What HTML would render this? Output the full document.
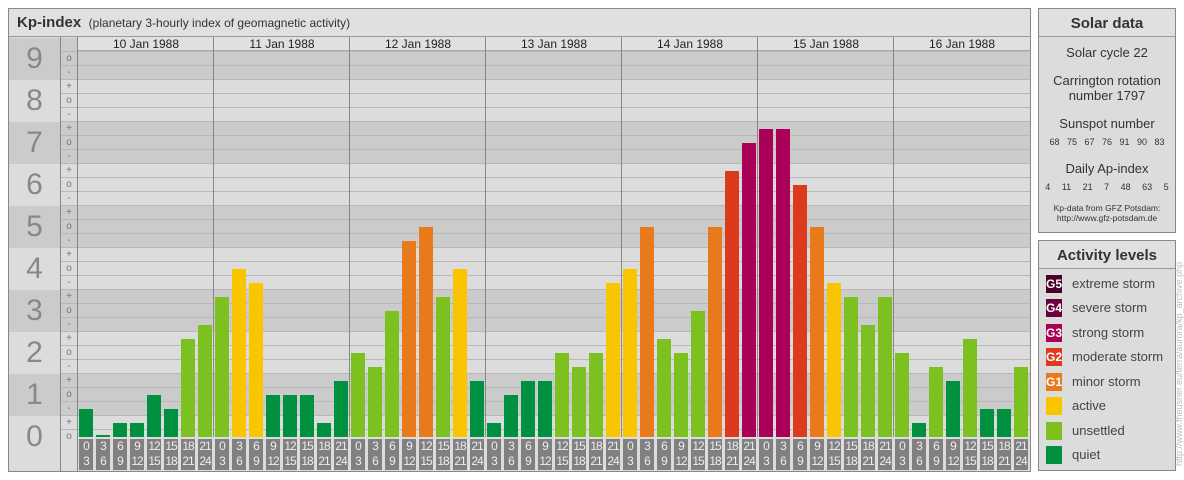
<!DOCTYPE html>
<html><head><meta charset="utf-8"><style>
*{margin:0;padding:0;box-sizing:border-box}
body{width:1184px;height:480px;background:#fff;position:relative;overflow:hidden;font-family:"Liberation Sans",sans-serif}
.a{position:absolute}
.b{position:absolute;width:14px;bottom:43px}
.q{background:#009140}.u{background:#7cc11f}.y{background:#f9c400}.o{background:#e87a1c}.r{background:#dc3a1c}.m{background:#aa0058}
.l{position:absolute;top:439px;width:14px;height:31px;background:#808080;color:#eee;font-size:12px;line-height:15px;text-align:center;letter-spacing:-1px}
.d{position:absolute;left:9px;width:51px;text-align:center;font-size:30px;color:#888;line-height:30px}
.s{position:absolute;left:61px;width:16px;text-align:center;font-size:10px;color:#777;line-height:10px}
.h{position:absolute;top:37px;width:136px;text-align:center;font-size:12px;color:#222;line-height:14px}
.g{position:absolute;left:1046px;width:16px;height:18px;color:#fff;font-size:12px;font-weight:bold;line-height:18px;text-align:center;letter-spacing:0}
.gt{position:absolute;left:1072px;font-size:13px;color:#444;line-height:18px}
.c{position:absolute;left:1039px;width:136px;text-align:center;color:#333}
</style></head><body>
<div class="a" style="left:8px;top:8px;width:1023px;height:464px;border:1px solid #888;background:#dcdcdc"></div>
<div class="a" style="left:9px;top:9px;width:1021px;height:28px;background:#e0e0e0;border-bottom:1px solid #999"></div>
<div class="a" style="left:17px;top:14px;font-size:15px;font-weight:bold;color:#333">Kp-index <span style="font-weight:normal;font-size:12px;color:#333">&nbsp;(planetary 3-hourly index of geomagnetic activity)</span></div>
<div class="a" style="left:9px;top:37px;width:1021px;height:400px;background:#dcdcdc"></div>
<div class="a" style="left:9px;top:38px;width:1021px;height:42px;background:#cbcbcb"></div>
<div class="a" style="left:9px;top:122px;width:1021px;height:42px;background:#cbcbcb"></div>
<div class="a" style="left:9px;top:206px;width:1021px;height:42px;background:#cbcbcb"></div>
<div class="a" style="left:9px;top:290px;width:1021px;height:42px;background:#cbcbcb"></div>
<div class="a" style="left:9px;top:374px;width:1021px;height:42px;background:#cbcbcb"></div>
<div class="a" style="left:78px;top:37px;width:952px;height:14px;background:#e0e0e0;border-bottom:1px solid #aaa"></div>
<div class="a" style="left:61px;top:51px;width:969px;height:380px;background:repeating-linear-gradient(to bottom,#b8b8b8 0,#b8b8b8 1px,transparent 1px,transparent 14px)"></div>
<div class="a" style="left:9px;top:437px;width:1021px;height:34px;background:#dcdcdc"></div>
<div class="a" style="left:60px;top:37px;width:1px;height:434px;background:#888"></div>
<div class="a" style="left:77px;top:37px;width:1px;height:434px;background:#888"></div>
<div class="a" style="left:213px;top:37px;width:1px;height:400px;background:#888"></div>
<div class="a" style="left:349px;top:37px;width:1px;height:400px;background:#888"></div>
<div class="a" style="left:485px;top:37px;width:1px;height:400px;background:#888"></div>
<div class="a" style="left:621px;top:37px;width:1px;height:400px;background:#888"></div>
<div class="a" style="left:757px;top:37px;width:1px;height:400px;background:#888"></div>
<div class="a" style="left:893px;top:37px;width:1px;height:400px;background:#888"></div>
<div class="h" style="left:78px">10 Jan 1988</div><div class="h" style="left:214px">11 Jan 1988</div><div class="h" style="left:350px">12 Jan 1988</div><div class="h" style="left:486px">13 Jan 1988</div><div class="h" style="left:622px">14 Jan 1988</div><div class="h" style="left:758px">15 Jan 1988</div><div class="h" style="left:894px">16 Jan 1988</div>
<div class="d" style="top:44px">9</div><div class="d" style="top:86px">8</div><div class="d" style="top:128px">7</div><div class="d" style="top:170px">6</div><div class="d" style="top:212px">5</div><div class="d" style="top:254px">4</div><div class="d" style="top:296px">3</div><div class="d" style="top:338px">2</div><div class="d" style="top:380px">1</div><div class="d" style="top:422px">0</div>
<div class="s" style="top:54px">o</div><div class="s" style="top:68px">-</div>
<div class="s" style="top:82px">+</div><div class="s" style="top:96px">o</div><div class="s" style="top:110px">-</div>
<div class="s" style="top:124px">+</div><div class="s" style="top:138px">o</div><div class="s" style="top:152px">-</div>
<div class="s" style="top:166px">+</div><div class="s" style="top:180px">o</div><div class="s" style="top:194px">-</div>
<div class="s" style="top:208px">+</div><div class="s" style="top:222px">o</div><div class="s" style="top:236px">-</div>
<div class="s" style="top:250px">+</div><div class="s" style="top:264px">o</div><div class="s" style="top:278px">-</div>
<div class="s" style="top:292px">+</div><div class="s" style="top:306px">o</div><div class="s" style="top:320px">-</div>
<div class="s" style="top:334px">+</div><div class="s" style="top:348px">o</div><div class="s" style="top:362px">-</div>
<div class="s" style="top:376px">+</div><div class="s" style="top:390px">o</div><div class="s" style="top:404px">-</div>
<div class="s" style="top:418px">+</div><div class="s" style="top:432px">o</div>
<div class="b q" style="left:79px;height:28px"></div><div class="b q" style="left:96px;height:2px"></div><div class="b q" style="left:113px;height:14px"></div><div class="b q" style="left:130px;height:14px"></div><div class="b q" style="left:147px;height:42px"></div><div class="b q" style="left:164px;height:28px"></div><div class="b u" style="left:181px;height:98px"></div><div class="b u" style="left:198px;height:112px"></div>
<div class="b u" style="left:215px;height:140px"></div><div class="b y" style="left:232px;height:168px"></div><div class="b y" style="left:249px;height:154px"></div><div class="b q" style="left:266px;height:42px"></div><div class="b q" style="left:283px;height:42px"></div><div class="b q" style="left:300px;height:42px"></div><div class="b q" style="left:317px;height:14px"></div><div class="b q" style="left:334px;height:56px"></div>
<div class="b u" style="left:351px;height:84px"></div><div class="b u" style="left:368px;height:70px"></div><div class="b u" style="left:385px;height:126px"></div><div class="b o" style="left:402px;height:196px"></div><div class="b o" style="left:419px;height:210px"></div><div class="b u" style="left:436px;height:140px"></div><div class="b y" style="left:453px;height:168px"></div><div class="b q" style="left:470px;height:56px"></div>
<div class="b q" style="left:487px;height:14px"></div><div class="b q" style="left:504px;height:42px"></div><div class="b q" style="left:521px;height:56px"></div><div class="b q" style="left:538px;height:56px"></div><div class="b u" style="left:555px;height:84px"></div><div class="b u" style="left:572px;height:70px"></div><div class="b u" style="left:589px;height:84px"></div><div class="b y" style="left:606px;height:154px"></div>
<div class="b y" style="left:623px;height:168px"></div><div class="b o" style="left:640px;height:210px"></div><div class="b u" style="left:657px;height:98px"></div><div class="b u" style="left:674px;height:84px"></div><div class="b u" style="left:691px;height:126px"></div><div class="b o" style="left:708px;height:210px"></div><div class="b r" style="left:725px;height:266px"></div><div class="b m" style="left:742px;height:294px"></div>
<div class="b m" style="left:759px;height:308px"></div><div class="b m" style="left:776px;height:308px"></div><div class="b r" style="left:793px;height:252px"></div><div class="b o" style="left:810px;height:210px"></div><div class="b y" style="left:827px;height:154px"></div><div class="b u" style="left:844px;height:140px"></div><div class="b u" style="left:861px;height:112px"></div><div class="b u" style="left:878px;height:140px"></div>
<div class="b u" style="left:895px;height:84px"></div><div class="b q" style="left:912px;height:14px"></div><div class="b u" style="left:929px;height:70px"></div><div class="b q" style="left:946px;height:56px"></div><div class="b u" style="left:963px;height:98px"></div><div class="b q" style="left:980px;height:28px"></div><div class="b q" style="left:997px;height:28px"></div><div class="b u" style="left:1014px;height:70px"></div>
<div class="l" style="left:79px">0<br>3</div><div class="l" style="left:96px">3<br>6</div><div class="l" style="left:113px">6<br>9</div><div class="l" style="left:130px">9<br>12</div><div class="l" style="left:147px">12<br>15</div><div class="l" style="left:164px">15<br>18</div><div class="l" style="left:181px">18<br>21</div><div class="l" style="left:198px">21<br>24</div>
<div class="l" style="left:215px">0<br>3</div><div class="l" style="left:232px">3<br>6</div><div class="l" style="left:249px">6<br>9</div><div class="l" style="left:266px">9<br>12</div><div class="l" style="left:283px">12<br>15</div><div class="l" style="left:300px">15<br>18</div><div class="l" style="left:317px">18<br>21</div><div class="l" style="left:334px">21<br>24</div>
<div class="l" style="left:351px">0<br>3</div><div class="l" style="left:368px">3<br>6</div><div class="l" style="left:385px">6<br>9</div><div class="l" style="left:402px">9<br>12</div><div class="l" style="left:419px">12<br>15</div><div class="l" style="left:436px">15<br>18</div><div class="l" style="left:453px">18<br>21</div><div class="l" style="left:470px">21<br>24</div>
<div class="l" style="left:487px">0<br>3</div><div class="l" style="left:504px">3<br>6</div><div class="l" style="left:521px">6<br>9</div><div class="l" style="left:538px">9<br>12</div><div class="l" style="left:555px">12<br>15</div><div class="l" style="left:572px">15<br>18</div><div class="l" style="left:589px">18<br>21</div><div class="l" style="left:606px">21<br>24</div>
<div class="l" style="left:623px">0<br>3</div><div class="l" style="left:640px">3<br>6</div><div class="l" style="left:657px">6<br>9</div><div class="l" style="left:674px">9<br>12</div><div class="l" style="left:691px">12<br>15</div><div class="l" style="left:708px">15<br>18</div><div class="l" style="left:725px">18<br>21</div><div class="l" style="left:742px">21<br>24</div>
<div class="l" style="left:759px">0<br>3</div><div class="l" style="left:776px">3<br>6</div><div class="l" style="left:793px">6<br>9</div><div class="l" style="left:810px">9<br>12</div><div class="l" style="left:827px">12<br>15</div><div class="l" style="left:844px">15<br>18</div><div class="l" style="left:861px">18<br>21</div><div class="l" style="left:878px">21<br>24</div>
<div class="l" style="left:895px">0<br>3</div><div class="l" style="left:912px">3<br>6</div><div class="l" style="left:929px">6<br>9</div><div class="l" style="left:946px">9<br>12</div><div class="l" style="left:963px">12<br>15</div><div class="l" style="left:980px">15<br>18</div><div class="l" style="left:997px">18<br>21</div><div class="l" style="left:1014px">21<br>24</div>
<div class="a" style="left:1038px;top:8px;width:138px;height:225px;border:1px solid #888;background:#dcdcdc"></div>
<div class="a" style="left:1039px;top:9px;width:136px;height:28px;background:#e0e0e0;border-bottom:1px solid #999"></div>
<div class="c" style="top:15px;font-size:15px;font-weight:bold">Solar data</div>
<div class="c" style="top:45px;font-size:13px">Solar cycle 22</div>
<div class="c" style="top:73px;font-size:13px;line-height:15px">Carrington rotation<br>number 1797</div>
<div class="c" style="top:116px;font-size:13px">Sunspot number</div>
<div class="c" style="top:137px;font-size:9px;word-spacing:5px">68 75 67 76 91 90 83</div>
<div class="c" style="top:161px;font-size:13px">Daily Ap-index</div>
<div class="c" style="top:182px;font-size:9px;word-spacing:9px">4 11 21 7 48 63 5</div>
<div class="c" style="top:203px;font-size:8.5px;line-height:10px">Kp-data from GFZ Potsdam:<br>http://www.gfz-potsdam.de</div>
<div class="a" style="left:1038px;top:240px;width:138px;height:231px;border:1px solid #888;background:#dcdcdc"></div>
<div class="a" style="left:1039px;top:241px;width:136px;height:28px;background:#e0e0e0;border-bottom:1px solid #999"></div>
<div class="c" style="top:247px;font-size:15px;font-weight:bold">Activity levels</div>
<div class="g" style="top:275px;background:#4a0028">G5</div><div class="gt" style="top:275px">extreme storm</div>
<div class="g" style="top:299px;background:#6a0040">G4</div><div class="gt" style="top:299px">severe storm</div>
<div class="g" style="top:324px;background:#aa0058">G3</div><div class="gt" style="top:324px">strong storm</div>
<div class="g" style="top:348px;background:#dc3a1c">G2</div><div class="gt" style="top:348px">moderate storm</div>
<div class="g" style="top:373px;background:#e87a1c">G1</div><div class="gt" style="top:373px">minor storm</div>
<div class="g" style="top:397px;background:#f9c400"></div><div class="gt" style="top:397px">active</div>
<div class="g" style="top:422px;background:#7cc11f"></div><div class="gt" style="top:422px">unsettled</div>
<div class="g" style="top:446px;background:#009140"></div><div class="gt" style="top:446px">quiet</div>
<div class="a" style="left:1174px;top:466px;width:230px;transform:rotate(-90deg);transform-origin:0 0;font-size:9px;color:#bbb;white-space:nowrap">http://www.fheusner.eu/terra/aurora/kp_archive.php</div>
</body></html>
